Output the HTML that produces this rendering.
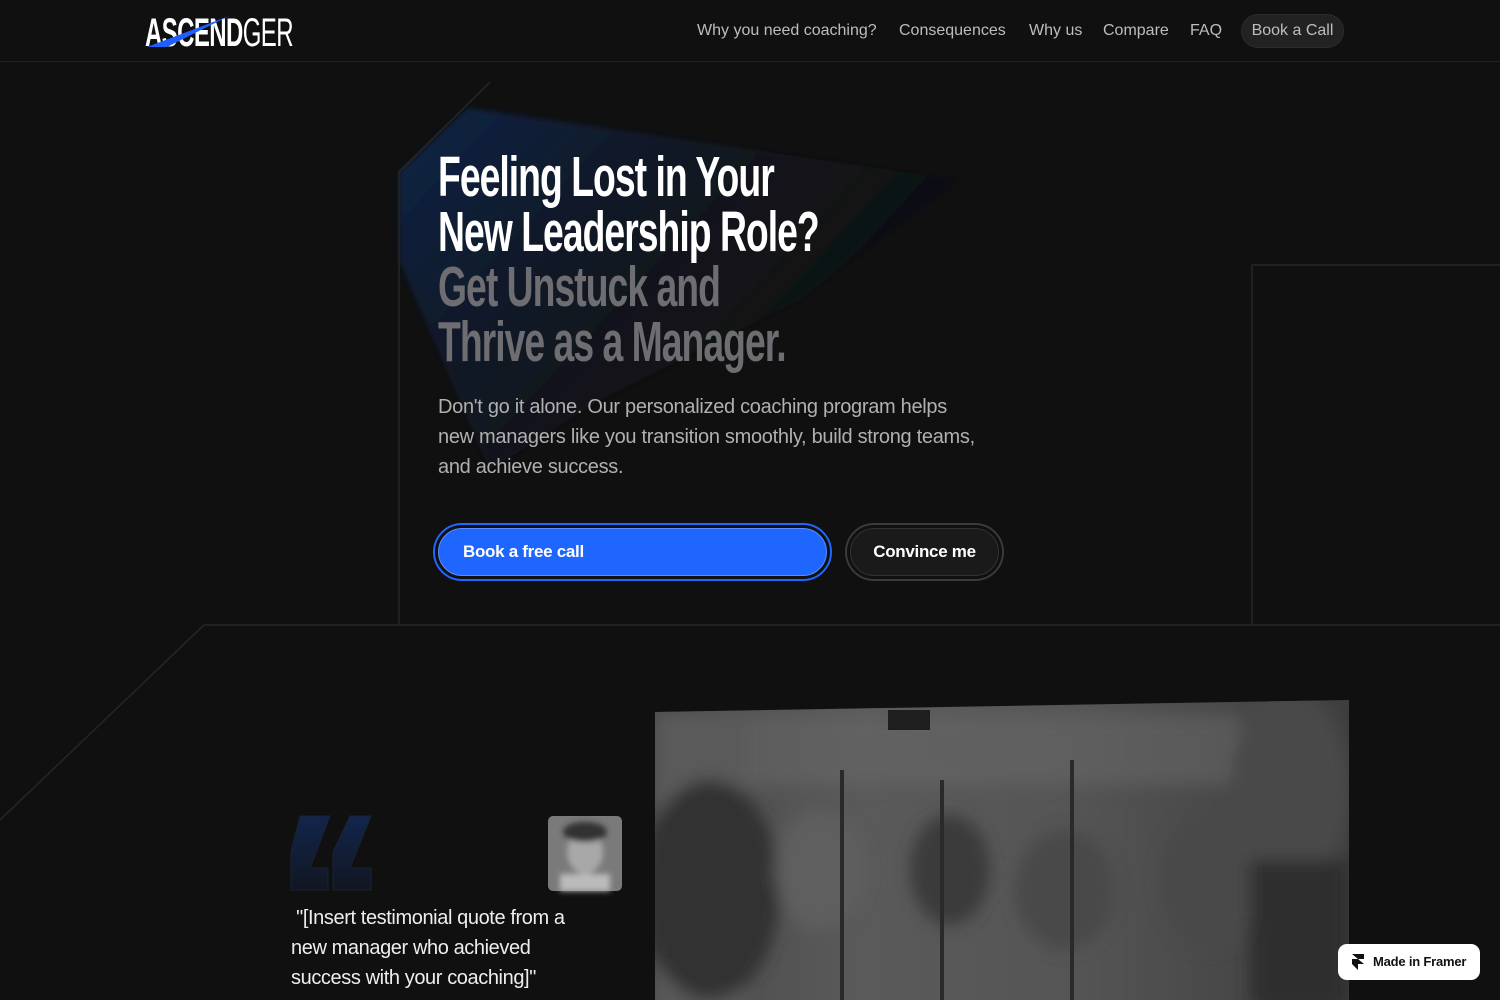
<!DOCTYPE html>
<html><head><meta charset="utf-8"><style>
*{margin:0;padding:0;box-sizing:border-box}
body{width:1500px;height:1000px;background:#101010;overflow:hidden;position:relative;font-family:"Liberation Sans",sans-serif;color:#fff}
.nav{position:absolute;top:0;left:0;width:1500px;height:62px;border-bottom:1px solid #222}
.nav a{position:absolute;top:22px;font-size:16px;color:#bdbdbd}
.logo{position:absolute;left:145px;top:13px;font-size:40px;font-weight:bold;letter-spacing:-1px;line-height:40px;transform:scaleX(0.6);transform-origin:left;white-space:nowrap}
h1{position:absolute;left:438px;top:150px;font-weight:bold;font-size:57px;line-height:55px;letter-spacing:-1.5px;transform:scaleX(0.655);transform-origin:left;white-space:nowrap}
.sub{position:absolute;left:438px;top:392px;width:548px;font-size:20px;line-height:30px;color:#b0b0b0;letter-spacing:-0.3px}
</style></head><body>
<svg width="1500" height="1000" style="position:absolute;left:0;top:0">
<defs>
<linearGradient id="bg" x1="0" y1="0" x2="1" y2="0.6"><stop offset="0" stop-color="#12244a"/><stop offset="0.5" stop-color="#121a2a" stop-opacity=".6"/><stop offset="1" stop-color="#101010" stop-opacity="0"/></linearGradient>
<filter id="bl"><feGaussianBlur stdDeviation="3"/></filter>
<filter id="bl2"><feGaussianBlur stdDeviation="8"/></filter>
<linearGradient id="q" x1="0" y1="0" x2="0" y2="1"><stop offset="0" stop-color="#12254d"/><stop offset="1" stop-color="#111621"/></linearGradient>
<linearGradient id="ph" x1="0" y1="0" x2="1" y2="0"><stop offset="0" stop-color="#4a4a4a"/><stop offset="0.3" stop-color="#5a5a5a"/><stop offset="0.6" stop-color="#555"/><stop offset="1" stop-color="#3e3e3e"/></linearGradient>
<clipPath id="pc"><polygon points="655,712 1349,700 1349,1000 655,1000"/></clipPath>
</defs>
<polygon points="468,108 399,172 399,260 490,470 600,400 800,300 960,180" fill="url(#bg)" filter="url(#bl)"/>
<polyline points="399,624 399,172 490,82" fill="none" stroke="#262626" stroke-width="1.5"/>
<polyline points="1252,624 1252,265 1500,265" fill="none" stroke="#262626" stroke-width="1.5"/>
<polyline points="0,820 204,625 1500,625" fill="none" stroke="#262626" stroke-width="1.5"/>
<polygon points="655,712 1349,700 1349,1000 655,1000" fill="url(#ph)"/>
<g clip-path="url(#pc)"><g filter="url(#bl2)">
<rect x="740" y="715" width="500" height="70" fill="#6a6a6a" opacity=".5"/>
<rect x="655" y="712" width="90" height="300" fill="#5a5a5a"/>
<ellipse cx="710" cy="890" rx="70" ry="110" fill="#333"/>
<ellipse cx="820" cy="870" rx="45" ry="60" fill="#5e5e5e"/>
<ellipse cx="950" cy="870" rx="40" ry="55" fill="#3a3a3a"/>
<ellipse cx="1065" cy="890" rx="50" ry="60" fill="#4a4a4a"/>
<ellipse cx="1210" cy="880" rx="50" ry="70" fill="#4a4a4a"/>
<ellipse cx="1290" cy="790" rx="60" ry="100" fill="#4a4a4a"/>
<rect x="1250" y="860" width="99" height="150" fill="#2e2e2e"/>
</g></g>
<rect x="840" y="770" width="4" height="230" fill="#2a2a2a"/>
<rect x="940" y="780" width="4" height="220" fill="#2a2a2a"/>
<rect x="1070" y="760" width="4" height="240" fill="#2a2a2a"/>
<rect x="888" y="710" width="42" height="20" fill="#1e1e1e"/>
<path d="M300,816 H330 L310,868 H328 V890 H291 V852 Z M350,816 H371 L350,868 H371 V890 H333 V852 Z" fill="url(#q)" stroke="#1a2233"/>
<rect x="548" y="816" width="74" height="75" rx="5" fill="#7a7a7a"/>
<g filter="url(#bl)"><ellipse cx="585" cy="852" rx="18" ry="22" fill="#a8a8a8"/>
<ellipse cx="585" cy="832" rx="22" ry="10" fill="#333"/>
<rect x="560" y="874" width="50" height="17" fill="#bbb"/></g>
</svg>
<div class="nav">
<div class="logo"><span>ASCEND</span><span style="font-weight:normal">GER</span></div>
<svg style="position:absolute;left:145px;top:12px" width="90" height="40"><polygon points="2,35 84,4 22,35" fill="#1f5fff"/></svg>
<a style="left:697px">Why you need coaching?</a>
<a style="left:899px">Consequences</a>
<a style="left:1029px">Why us</a>
<a style="left:1103px">Compare</a>
<a style="left:1190px">FAQ</a>
<div style="position:absolute;left:1241px;top:14px;width:103px;height:34px;border-radius:17px;background:#222;border:1px solid #2c2c2c;color:#bdbdbd;font-size:16px;line-height:32px;text-align:center">Book a Call</div>
</div>
<h1>Feeling Lost in Your<br>New Leadership Role?<br><span style="color:#6d6d72">Get Unstuck and<br>Thrive as a Manager.</span></h1>
<div class="sub">Don't go it alone. Our personalized coaching program helps new managers like you transition smoothly, build strong teams, and achieve success.</div>
<div style="position:absolute;left:433px;top:523px;width:399px;height:58px;border-radius:29px;border:2px solid #1f66ff;padding:3px">
<div style="width:100%;height:100%;border-radius:25px;background:#1f66ff;border:1px solid #5a8cff;font-size:17px;font-weight:bold;line-height:46px;padding-left:24px;letter-spacing:-0.3px">Book a free call</div></div>
<div style="position:absolute;left:845px;top:523px;width:159px;height:58px;border-radius:29px;border:2px solid #3a3a3a;padding:3px">
<div style="width:100%;height:100%;border-radius:25px;background:#1a1a1a;border:1px solid #333;font-size:17px;font-weight:bold;line-height:46px;text-align:center;letter-spacing:-0.3px">Convince me</div></div>
<div style="position:absolute;left:291px;top:903px;width:310px;font-size:20px;line-height:30px;color:#eee;letter-spacing:-0.4px">&nbsp;"[Insert testimonial quote from a new manager who achieved success with your coaching]"</div>
<div style="position:absolute;left:1338px;top:944px;width:142px;height:36px;border-radius:9px;background:#fff;color:#111;font-size:13px;font-weight:bold;line-height:36px;padding-left:35px;letter-spacing:-0.2px">Made in Framer
<svg style="position:absolute;left:14px;top:10px" width="12" height="16"><path d="M0,0H12V5H6ZM0,5H6L12,10H6V16L0,10Z" fill="#111"/></svg></div>
</body></html>
